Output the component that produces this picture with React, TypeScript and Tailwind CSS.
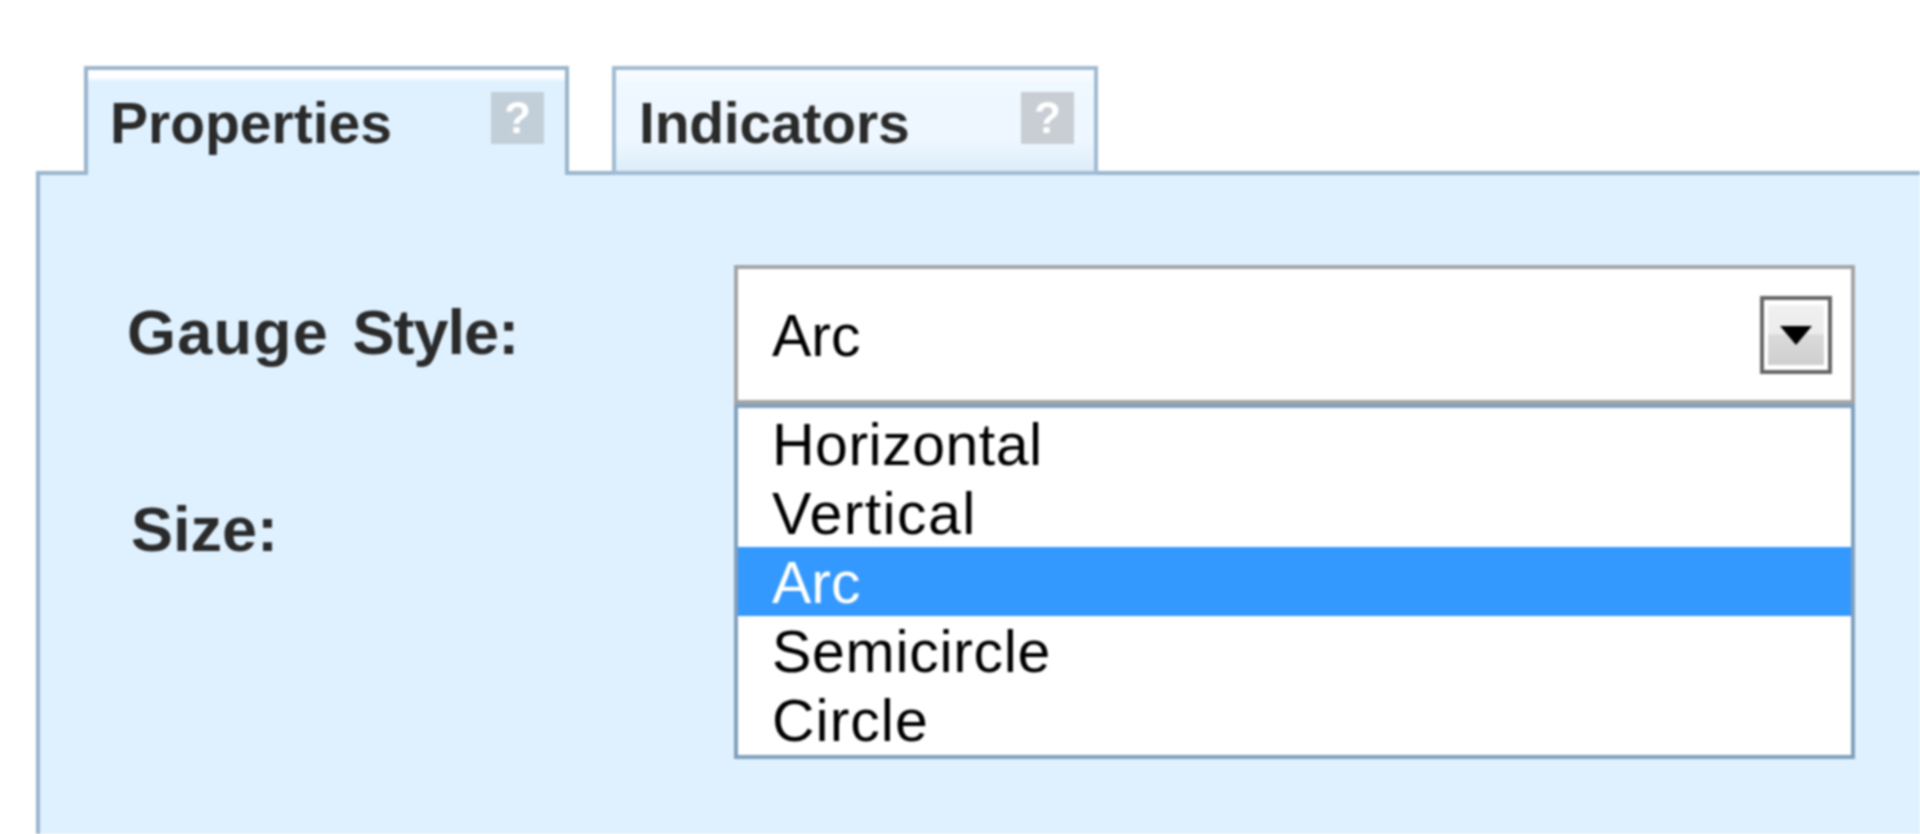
const font = "font-['Liberation_Sans',Arial,sans-serif]";

function Help({ gray }: { gray?: boolean }) {
  return (
    <span
      className={`flex h-[52px] w-[53px] shrink-0 items-center justify-center text-[44px] font-bold leading-none text-white ${gray ? "bg-[#c8ced3]" : "bg-[#c2cfd8]"}`}
    >
      ?
    </span>
  );
}

function ArrowButton() {
  return (
    <span className="flex h-[78px] w-[72px] shrink-0 items-center justify-center border-[4px] border-[#666666] bg-white px-[4px] py-[5px]">
      <span className="flex h-full w-full items-center justify-center bg-[linear-gradient(#f0f0f0_0%,#ececec_48%,#dadada_50%,#cfcfcf_100%)]">
        <svg width="34" height="20" viewBox="0 0 34 20">
          <path d="M1 1h32L17 20z" fill="#000" />
        </svg>
      </span>
    </span>
  );
}

const options = [
  { label: "Horizontal", cls: "tracking-[0.5px]" },
  { label: "Vertical", cls: "tracking-[1.4px]" },
  { label: "Arc", cls: "bg-[#3399ff] text-white" },
  { label: "Semicircle", cls: "tracking-[0.7px]" },
  { label: "Circle", cls: "tracking-[1px]" },
];

export default function App() {
  return (
    <div className={`${font} flex h-[834px] w-[1920px] flex-col overflow-hidden bg-white pl-[36px] pt-[66px] text-[#2a2a2a] blur-[0.8px]`}>
      <div className="relative z-10 ml-[48px] flex h-[105px] items-stretch gap-[43px]">
        <div className="-mb-[4px] flex w-[485px] items-start justify-between border-x-[4px] border-t-[4px] border-[#9ab5cc] bg-[linear-gradient(#ffffff_0,#ffffff_7px,#dff1ff_12px)] pl-[22px] pr-[21px] pt-[22px]">
          <span className="text-[57px] font-bold leading-[62px]">Properties</span>
          <Help />
        </div>
        <div className="-mb-[4px] flex w-[486px] items-start justify-between border-[4px] border-[#a0bbd1] bg-[linear-gradient(#fbfdff_0,#eff8ff_15%,#eef7ff_70%,#dcedf9_100%)] pl-[23px] pr-[20px] pt-[22px]">
          <span className="text-[57px] font-bold leading-[62px] tracking-[-0.2px]">Indicators</span>
          <Help gray />
        </div>
      </div>
      <div className="flex flex-1 gap-[214px] border-l-[4px] border-t-[4px] border-[#9ab5cc] bg-[#dff1ff] pl-[87px] pt-[90px]">
        <div className="flex w-[393px] flex-col">
          <div className="flex h-[139px] items-center text-[63px] font-bold leading-none [word-spacing:6px]">
            <span className="-mt-[4px]">
              <span className="tracking-[1.2px]">Gauge</span> <span className="tracking-[-1px]">Style:</span>
            </span>
          </div>
          <div className="mt-[94px] pl-[4px] text-[63px] font-bold leading-none">Size:</div>
        </div>
        <div className="relative h-[139px] w-[1121px] text-[59px] leading-none text-black">
          <div className="flex h-[139px] items-center justify-between border-[4px] border-[#a4a4a4] bg-white pl-[34px] pr-[19px]">
            <span className="pt-[3px]">Arc</span>
            <ArrowButton />
          </div>
          <ul className="absolute left-0 right-0 top-full border-[4px] border-[#80a0be] bg-white pb-[1px] pt-[1px]">
            {options.map((o) => (
              <li key={o.label} className={`flex h-[69px] items-center pl-[34px] pt-[4px] ${o.cls}`}>
                {o.label}
              </li>
            ))}
          </ul>
        </div>
      </div>
    </div>
  );
}
